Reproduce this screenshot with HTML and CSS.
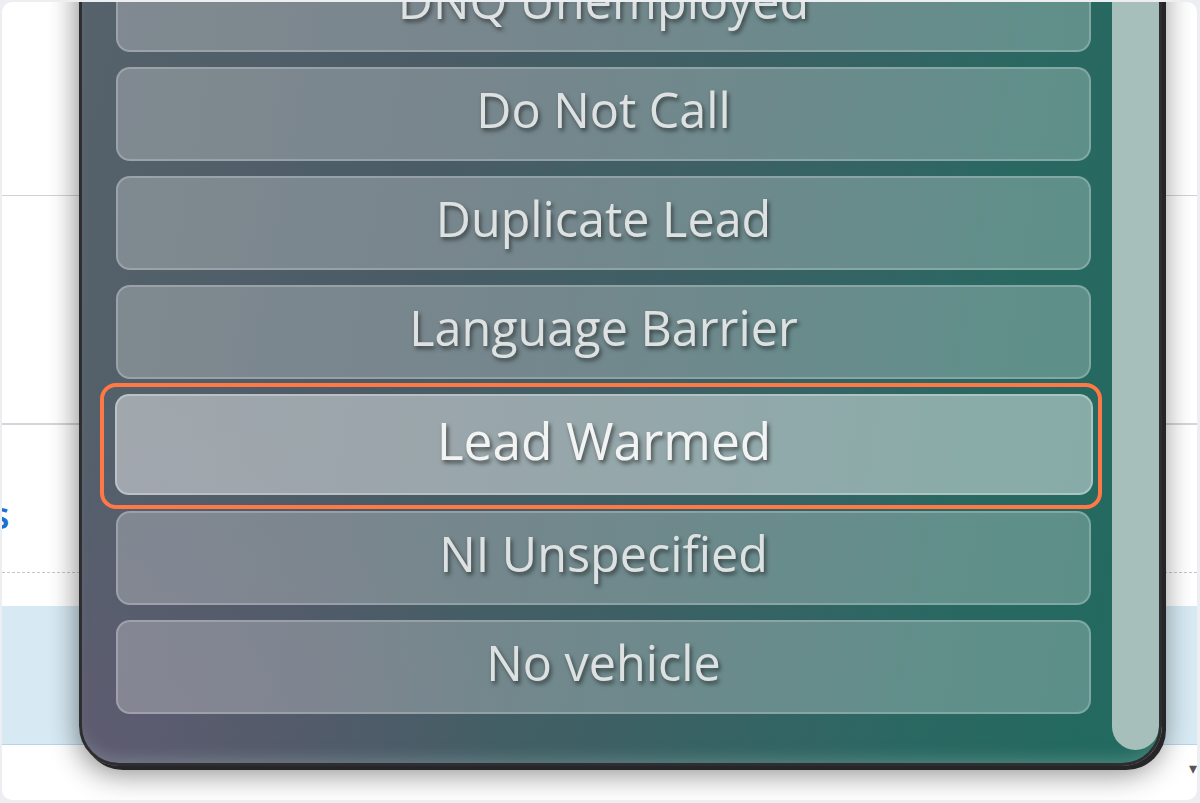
FILE: index.html
```html
<!DOCTYPE html>
<html lang="en">
<head>
<meta charset="utf-8">
<title>Disposition picker</title>
<link rel="stylesheet" href="styles.css">
</head>
<body>
<div class="frame">
  <div class="page">
    <div class="row row-a"></div>
    <div class="row row-b"></div>
    <div class="row row-c"><span class="link">s</span></div>
    <div class="spacer"></div>
    <div class="info-block"></div>
  </div>
  <span class="caret">▾</span>

  <div class="panel">
    <div class="list">
      <button class="opt">DNQ Unemployed</button>
      <button class="opt">Do Not Call</button>
      <button class="opt">Duplicate Lead</button>
      <button class="opt">Language Barrier</button>
      <button class="opt opt-active">Lead Warmed</button>
      <button class="opt">NI Unspecified</button>
      <button class="opt">No vehicle</button>
    </div>
    <div class="scrollbar"><div class="thumb"></div></div>
  </div>

  <div class="focus-ring"></div>
</div>
</body>
</html>
```

FILE: styles.css
```css
* { box-sizing: border-box; }

html, body {
  margin: 0;
  padding: 0;
}

body {
  background: #eceef2;
  font-family: "Open Sans", "Noto Sans", "Liberation Sans", sans-serif;
  width: 1200px;
  height: 803px;
  overflow: hidden;
}

.frame {
  position: relative;
  margin: 2px 3px 3px 2px;
  width: 1195px;
  height: 798px;
  background: #ffffff;
  border-radius: 10px;
  overflow: hidden;
}

/* background page content under the panel */
.page {
  display: flex;
  flex-direction: column;
}

.row-a {
  height: 194px;
  border-bottom: 1px solid #d2d2d6;
}

.row-b {
  height: 229px;
  border-bottom: 2px solid #d6d6da;
}

.row-c {
  height: 148px;
  border-bottom: 1px dashed #c6c6ca;
  padding-top: 70px;
}

.link {
  display: block;
  margin-left: -11px;
  font-size: 38px;
  line-height: 1;
  font-weight: 600;
  color: #1d6fd2;
}

.spacer {
  height: 33px;
}

.info-block {
  height: 139px;
  background: #d7eaf4;
  border-bottom: 1px solid #b6d6e8;
}

.caret {
  position: absolute;
  right: 0;
  top: 758px;
  font-size: 16px;
  color: #555;
  line-height: 1;
}

/* modal panel */
.panel {
  position: absolute;
  left: 77px;
  top: -62px;
  width: 1083px;
  height: 826px;
  display: flex;
  border: 3px solid #2e2e30;
  border-radius: 0 0 40px 40px;
  overflow: hidden;
  background:
    radial-gradient(ellipse 40% 45% at 0% 100%, rgba(104, 88, 118, 0.55), rgba(104, 88, 118, 0) 100%),
    linear-gradient(100deg, #56626c 0%, #4b5c66 30%, #3d6065 55%, #2a6862 80%, #216a5f 100%);
  box-shadow:
    4px 4px 0 #262628,
    inset 0 -12px 16px -8px rgba(190, 220, 215, 0.25),
    0 10px 30px rgba(0, 0, 0, 0.3),
    0 0 28px rgba(0, 0, 0, 0.25);
}

.list {
  flex: 1;
  display: flex;
  flex-direction: column;
  gap: 15px;
  padding: 15px 21px 50px 34px;
}

.opt {
  display: flex;
  align-items: center;
  justify-content: center;
  height: 94px;
  flex: 0 0 auto;
  padding: 0 0 10px;
  border: 2px solid rgba(255, 255, 255, 0.22);
  border-radius: 14px;
  background: rgba(255, 255, 255, 0.26);
  font-family: "Open Sans", "Noto Sans", "Liberation Sans", sans-serif;
  font-size: 48.5px;
  font-weight: 400;
  color: #dde1e1;
  text-shadow: 2px 3px 4px rgba(0, 0, 0, 0.5);
}

.opt-active {
  height: 101px;
  margin: 0 -2px 1px -1px;
  font-size: 51.5px;
  background: rgba(255, 255, 255, 0.45);
  border-color: rgba(255, 255, 255, 0.3);
  color: #f2f3f3;
  text-shadow: 2px 3px 4px rgba(0, 0, 0, 0.55);
}

.scrollbar {
  width: 47px;
  display: flex;
  flex-direction: column;
  justify-content: flex-end;
  padding-bottom: 13px;
}

.thumb {
  height: 780px;
  background: #a6bfbb;
  border-radius: 0 0 24px 24px;
}

/* orange focus annotation */
.focus-ring {
  position: absolute;
  left: 98px;
  top: 381px;
  width: 1002px;
  height: 126px;
  border: 4px solid #ff7845;
  border-radius: 16px;
  pointer-events: none;
}
```
